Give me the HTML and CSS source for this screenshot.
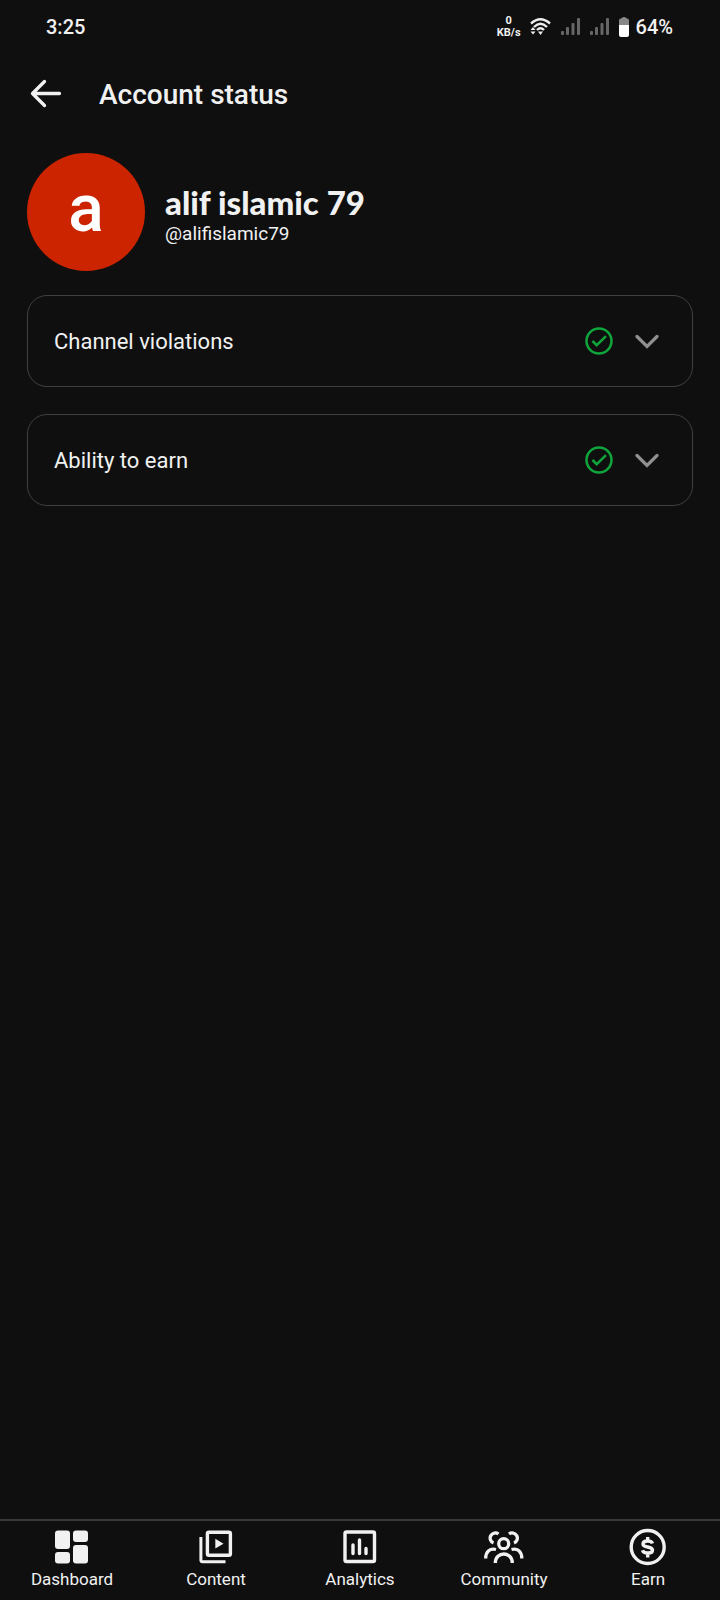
FILE: index.html
```html
<!DOCTYPE html>
<html lang="en">
<head>
    <meta charset="UTF-8">
    <meta name="viewport" content="width=device-width, initial-scale=1.0">
    <title>Account status</title>
    <link rel="stylesheet" href="styles.css">
</head>
<body>
    <div class="status-bar">
        <span class="clock">3:25</span>
        <div class="status-icons">
            <div class="net-speed"><span>0</span><span>KB/s</span></div>
            <svg class="wifi" viewBox="0 0 22 20" aria-hidden="true">
                <g fill="none" stroke="#eee" stroke-width="2.400">
                    <path d="M1 6.500Q10.500-2 20 6.500"/>
                    <path d="M4 10Q10.500 3.500 17 10"/>
                    <path d="M7 13Q10.500 9.500 14 13"/>
                </g>
                <path d="M8 14.500h5L10.500 18zM0.500 13l2.500-3 2.500 3zM0.500 14.500h5l-2.500 3z" fill="#eee"/>
            </svg>
            <svg class="signal" viewBox="0 0 20 20" fill="#666" aria-hidden="true">
                <rect x="0" y="14" width="3" height="4" rx="1"/>
                <rect x="5" y="10" width="3" height="8" rx="1"/>
                <rect x="10.500" y="6" width="3" height="12" rx="1"/>
                <rect x="16" y="1" width="3" height="17" rx="1"/>
            </svg>
            <svg class="signal" viewBox="0 0 20 20" fill="#666" aria-hidden="true">
                <rect x="0" y="14" width="3" height="4" rx="1"/>
                <rect x="5" y="10" width="3" height="8" rx="1"/>
                <rect x="10.500" y="6" width="3" height="12" rx="1"/>
                <rect x="16" y="1" width="3" height="17" rx="1"/>
            </svg>
            <svg class="battery" viewBox="0 0 10 20" aria-hidden="true">
                <path d="M0 8V3Q0 1.500 2 1.500Q3 0 5 0Q7 0 8 1.500Q10 1.500 10 3V8z" fill="#888"/>
                <path d="M0 8H10V18Q10 20 8 20H2Q0 20 0 18z" fill="#fff"/>
            </svg>
            <span class="percent">64%</span>
        </div>
    </div>

    <header class="top-bar">
        <button type="button" class="back" aria-label="Back">
            <svg viewBox="0 0 32 32" fill="none" stroke="#f1f1f1" stroke-width="3.300" stroke-linecap="round" stroke-linejoin="round" aria-hidden="true">
                <path d="M14.500 3.500L2.500 15.500l12 12M2.500 15.500H29.500"/>
            </svg>
        </button>
        <h1>Account status</h1>
    </header>

    <main>
        <section class="profile">
            <div class="avatar">a</div>
            <div class="profile-text">
                <h2>alif islamic 79</h2>
                <p>@alifislamic79</p>
            </div>
        </section>

        <button type="button" class="card" aria-expanded="false">
            <span class="card-title">Channel violations</span>
            <svg class="check" viewBox="0 0 28 28" fill="none" stroke="#10a53c" stroke-width="2.500" aria-hidden="true">
                <circle cx="14" cy="14" r="12.500"/>
                <path d="M7.500 14l4.200 4.200 9.300-9"/>
            </svg>
            <svg class="chevron" viewBox="0 0 24 24" fill="none" stroke="#909090" stroke-width="3.200" stroke-linecap="round" aria-hidden="true">
                <path d="M2 7.500l10 10L22 7.500"/>
            </svg>
        </button>

        <button type="button" class="card" aria-expanded="false">
            <span class="card-title">Ability to earn</span>
            <svg class="check" viewBox="0 0 28 28" fill="none" stroke="#10a53c" stroke-width="2.500" aria-hidden="true">
                <circle cx="14" cy="14" r="12.500"/>
                <path d="M7.500 14l4.200 4.200 9.300-9"/>
            </svg>
            <svg class="chevron" viewBox="0 0 24 24" fill="none" stroke="#909090" stroke-width="3.200" stroke-linecap="round" aria-hidden="true">
                <path d="M2 7.500l10 10L22 7.500"/>
            </svg>
        </button>
    </main>

    <nav class="bottom-nav">
        <a href="#dashboard">
            <svg viewBox="0 0 40 40" fill="#f1f1f1" aria-hidden="true">
                <rect x="3" y="3.500" width="15" height="18.500" rx="3"/>
                <rect x="21" y="3.500" width="15" height="11.500" rx="3"/>
                <rect x="3" y="25" width="15" height="11.500" rx="3"/>
                <rect x="21" y="18" width="15" height="18.500" rx="3"/>
            </svg>
            <span>Dashboard</span>
        </a>
        <a href="#content">
            <svg viewBox="0 0 40 40" fill="none" stroke="#f1f1f1" stroke-width="3.400" aria-hidden="true">
                <rect x="11.400" y="5.200" width="23" height="23" rx="1.500"/>
                <path d="M4.900 10V33Q4.900 34.800 6.700 34.800H29.500" stroke-width="3"/>
                <path d="M19.300 11.800v9.700l8.200-4.850z" fill="#f1f1f1" stroke="none"/>
            </svg>
            <span>Content</span>
        </a>
        <a href="#analytics">
            <svg viewBox="0 0 40 40" fill="none" stroke="#f1f1f1" stroke-width="3.400" aria-hidden="true">
                <rect x="5" y="5" width="29.500" height="29.500" rx="1.500"/>
                <path d="M13 18V26.500M19.500 13V26.500M26 21.500V26.500" stroke-linecap="round"/>
            </svg>
            <span>Analytics</span>
        </a>
        <a href="#community">
            <svg viewBox="0 0 40 40" fill="none" stroke="#f1f1f1" stroke-width="3.300" aria-hidden="true">
                <circle cx="19.700" cy="16.700" r="5"/>
                <path d="M11.300 36C11.300 24 28.300 24 28.300 36"/>
                <path d="M14.500 7A5.200 5.200 0 1 0 9.500 16M25 7A5.200 5.200 0 1 1 30 16"/>
                <path d="M1.700 31.500C1.700 24.500 6 21 12 22.500M37.800 31.500C37.800 24.500 33.500 21 27.500 22.500"/>
            </svg>
            <span>Community</span>
        </a>
        <a href="#earn">
            <svg viewBox="0 0 40 40" fill="none" stroke="#f1f1f1" stroke-width="3.400" aria-hidden="true">
                <circle cx="19.700" cy="20" r="16.500"/>
                <path d="M24.500 16.500C23.500 13 15 13 15 17C15 21.500 24.500 18.500 24.500 23.200C24.500 27 15.500 27 14.500 23.200M19.700 10V14M19.700 26V30.500"/>
            </svg>
            <span>Earn</span>
        </a>
    </nav>
</body>
</html>
```
FILE: styles.css
```css
* {
    box-sizing: border-box;
}

body {
    display: flex;
    flex-direction: column;
    min-height: 100vh;
    margin: 0;
    background-color: #0f0f0f;
    color: #f1f1f1;
    font-family: Roboto, sans-serif;
}

h1, h2, p {
    margin: 0;
}

svg {
    display: block;
    flex: none;
}

button {
    border: none;
    background: none;
    color: inherit;
    font-family: inherit;
    cursor: pointer;
}

.status-bar {
    display: flex;
    align-items: center;
    justify-content: space-between;
    height: 54px;
    padding: 0 47px 0 46px;
    font-size: 20px;
    font-weight: 500;
}

.status-icons {
    display: flex;
    align-items: center;
}

.net-speed {
    display: flex;
    flex-direction: column;
    align-items: center;
    margin-right: 9px;
    font-size: 11px;
    font-weight: 700;
    line-height: 12px;
}

.wifi {
    width: 22px;
    height: 20px;
    margin-right: 9px;
}

.signal {
    width: 20px;
    height: 20px;
    margin-right: 9px;
}

.battery {
    width: 10px;
    height: 20px;
    margin-right: 7px;
}

.top-bar {
    display: flex;
    align-items: center;
    gap: 37px;
    height: 80px;
    padding: 0 30px;
}

.back {
    padding: 0;
}

.back svg {
    width: 32px;
    height: 32px;
}

h1 {
    font-size: 28px;
    font-weight: 500;
}

main {
    flex: 1;
    padding: 19px 27px;
}

.profile {
    display: flex;
    align-items: center;
    gap: 20px;
    margin-bottom: 24px;
}

.avatar {
    display: flex;
    align-items: center;
    justify-content: center;
    width: 118px;
    height: 118px;
    padding-bottom: 8px;
    border-radius: 50%;
    background-color: #cc2400;
    color: #fff;
    font-size: 66px;
    font-weight: 500;
}

.profile-text {
    padding-top: 4px;
}

h2 {
    font-family: Lato, sans-serif;
    font-size: 33px;
    font-weight: 900;
    line-height: 40px;
}

.profile p {
    font-size: 19px;
    line-height: 24px;
}

.card {
    display: flex;
    align-items: center;
    width: 100%;
    height: 92px;
    margin-bottom: 27px;
    padding: 0 33px 0 26px;
    border: 1px solid #404040;
    border-radius: 20px;
    text-align: left;
}

.card-title {
    flex: 1;
    font-size: 22px;
}

.check {
    width: 28px;
    height: 28px;
    margin-right: 22px;
}

.chevron {
    width: 24px;
    height: 24px;
}

.bottom-nav {
    display: flex;
    height: 81px;
    padding-top: 6px;
    border-top: 2px solid #3a3a3a;
}

.bottom-nav a {
    display: flex;
    flex: 1;
    flex-direction: column;
    align-items: center;
    color: inherit;
    font-size: 17px;
    line-height: 24px;
    text-decoration: none;
}

.bottom-nav svg {
    width: 40px;
    height: 40px;
}
```
